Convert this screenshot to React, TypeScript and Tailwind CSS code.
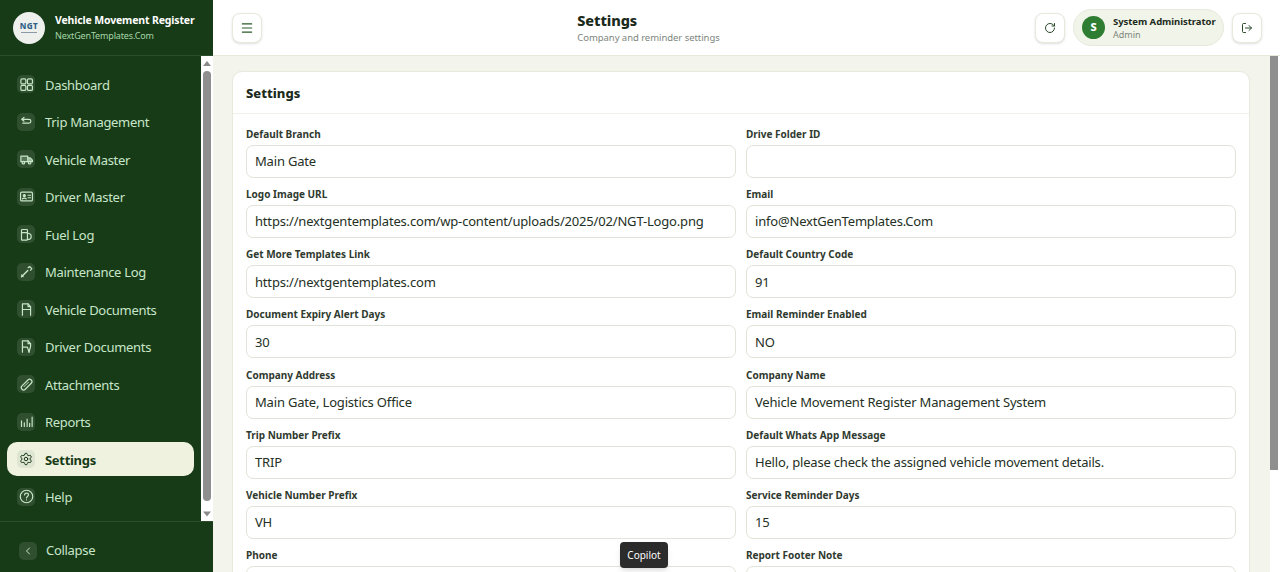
import { ChevronLeft, LogOut, Menu, RotateCw, Settings } from "lucide-react"
import type { FC, ReactNode } from "react"

const font = "font-['Noto_Sans','Open_Sans',sans-serif]"

const Glyph: FC<{ children: ReactNode }> = ({ children }) => (
  <svg width="15" height="15" viewBox="0 0 24 24" fill="none" stroke="currentColor" strokeWidth="1.9" strokeLinecap="round" strokeLinejoin="round">
    {children}
  </svg>
)

// sidebar glyphs, drawn to follow the reference strokes
const icons: Record<string, ReactNode> = {
  Dashboard: (
    <Glyph>
      <rect x="3" y="3" width="8" height="8" rx="2" />
      <rect x="13.5" y="3" width="8" height="8" rx="2" />
      <rect x="3" y="13.5" width="8" height="8" rx="2" />
      <rect x="13.5" y="13.5" width="8" height="8" rx="2" />
    </Glyph>
  ),
  "Trip Management": (
    <Glyph>
      <path d="M8 5.500 4.500 8.500 8 11.500" />
      <path d="M5 8.500h11c2 0 3 1.300 3 3s-1 3-3 3H6" />
    </Glyph>
  ),
  "Vehicle Master": (
    <Glyph>
      <path d="M3 6.500h11v9H3z" fill="currentColor" fillOpacity="0.25" />
      <path d="M14 9.500h4l3.500 3.500v2.500H14" fill="currentColor" fillOpacity="0.7" />
      <circle cx="7" cy="17" r="2" />
      <circle cx="17" cy="17" r="2" />
    </Glyph>
  ),
  "Driver Master": (
    <Glyph>
      <rect x="2.500" y="5" width="19" height="14" rx="2" />
      <circle cx="8.500" cy="10.500" r="1.700" fill="currentColor" />
      <path d="M5.500 16c.6-2 5.400-2 6 0" />
      <path d="M14.500 10h4M14.500 14h4" />
    </Glyph>
  ),
  "Fuel Log": (
    <Glyph>
      <rect x="4" y="4" width="9.500" height="17" rx="1" />
      <path d="M4 9h9.500" />
      <path d="M13.500 10c3.500 0 6 1.800 6 5s-2.500 5-6 5" />
    </Glyph>
  ),
  "Maintenance Log": (
    <Glyph>
      <path d="M4 20.500 14 10.500" strokeWidth="2.300" />
      <path d="m14.500 6 2.500-2 3.500 3.500-2 2.500" />
      <path d="M4 17.500 6.500 20" />
    </Glyph>
  ),
  "Vehicle Documents": (
    <Glyph>
      <path d="M5.500 21V3h9l4 4.500V21" />
      <path d="M14.500 3v4.500h4" />
      <path d="M5.500 12h13" />
    </Glyph>
  ),
  "Driver Documents": (
    <Glyph>
      <path d="M5.500 21V3h9l4 4.500V12l-2.500 9" />
      <path d="M14.500 3v4.500h4" />
      <path d="M5.500 13h8l2.500 8" />
    </Glyph>
  ),
  Attachments: (
    <Glyph>
      <rect x="1.500" y="8.500" width="21" height="7.500" rx="3.750" transform="rotate(-45 12 12)" />
      <path d="m8 15.500 7-7" strokeWidth="1.500" />
    </Glyph>
  ),
  Reports: (
    <Glyph>
      <path d="M4 11v9M8.500 14v6M13 8v12M17 15v5M21 5v15" />
    </Glyph>
  ),
  Settings: <Settings size={14} strokeWidth={1.7} />,
  Help: (
    <Glyph>
      <circle cx="12" cy="12" r="10" />
      <path d="M8.800 9.300c.4-3.700 6.400-3.700 6.400 0 0 2.500-3.200 2.600-3.200 5" />
      <path d="M12 17.500h.01" />
    </Glyph>
  ),
}

const navItems = [
  "Dashboard",
  "Trip Management",
  "Vehicle Master",
  "Driver Master",
  "Fuel Log",
  "Maintenance Log",
  "Vehicle Documents",
  "Driver Documents",
  "Attachments",
  "Reports",
  "Settings",
  "Help",
]

const fields = [
  ["Default Branch", "Main Gate"],
  ["Drive Folder ID", ""],
  ["Logo Image URL", "https://nextgentemplates.com/wp-content/uploads/2025/02/NGT-Logo.png"],
  ["Email", "info@NextGenTemplates.Com"],
  ["Get More Templates Link", "https://nextgentemplates.com"],
  ["Default Country Code", "91"],
  ["Document Expiry Alert Days", "30"],
  ["Email Reminder Enabled", "NO"],
  ["Company Address", "Main Gate, Logistics Office"],
  ["Company Name", "Vehicle Movement Register Management System"],
  ["Trip Number Prefix", "TRIP"],
  ["Default Whats App Message", "Hello, please check the assigned vehicle movement details."],
  ["Vehicle Number Prefix", "VH"],
  ["Service Reminder Days", "15"],
  ["Phone", ""],
  ["Report Footer Note", ""],
]

const Sidebar: FC = () => (
  <aside className="flex h-full w-[213px] shrink-0 flex-col bg-[#173a17]">
    <div className="flex h-[56px] shrink-0 items-center gap-[10px] border-b border-[#2c4d2c] pl-[13px]">
      <div className="flex h-[32px] w-[32px] flex-col items-center justify-center rounded-full bg-[#eef0ee]">
        <span className="text-[8px] leading-[8px] font-extrabold tracking-[0.5px] text-[#2f5f86]">NGT</span>
        <span className="mt-[2px] h-[1px] w-[16px] bg-[#8d9aa5]" />
      </div>
      <div className="pt-[2px]">
        <div className="text-[10.5px] leading-[15px] font-bold tracking-[-0.15px] text-white">Vehicle Movement Register</div>
        <div className="text-[9px] leading-[16px] tracking-[-0.15px] text-[#a5d6a7]">NextGenTemplates.Com</div>
      </div>
    </div>
    <div className="flex min-h-0 flex-1">
      <nav className="flex w-[201px] flex-col gap-[3.5px] pt-[11px] pl-[7px]">
        {navItems.map((label) => {
          const active = label === "Settings"
          return (
            <div
              key={label}
              className={`flex h-[34px] w-[187px] shrink-0 items-center gap-[10px] rounded-[10px] pl-[10px] ${
                active ? "bg-[#eef2df] font-bold text-[#173a17]" : "text-[#c8e6c9]"
              }`}
            >
              <span
                className={`flex h-[18px] w-[18px] items-center justify-center rounded-[5px] ${
                  active ? "bg-[#dfe5d3]" : "bg-[#2f4f2f]"
                }`}
              >
                {icons[label]}
              </span>
              <span className="pt-[3px] text-[13px] tracking-[-0.3px]">{label}</span>
            </div>
          )
        })}
      </nav>
      <div className="flex w-[12px] flex-col items-center bg-white">
        <svg className="h-[15px] w-[10px] shrink-0" viewBox="0 0 10 15" fill="#8a8a8a">
          <path d="M1 10 5 5l4 5z" />
        </svg>
        <div className="w-[8px] flex-1 rounded-full bg-[#8f8f8f]" />
        <svg className="h-[20px] w-[10px] shrink-0" viewBox="0 0 10 20" fill="#8a8a8a">
          <path d="M1 10.500h8l-4 5z" />
        </svg>
      </div>
    </div>
    <div className="flex h-[51px] shrink-0 items-center gap-[9px] border-t border-[#2c4d2c] pt-[7px] pl-[19px] text-[#c8e6c9]">
      <span className="flex h-[18px] w-[18px] items-center justify-center rounded-[5px] bg-[#2f4f2f]">
        <ChevronLeft size={12} />
      </span>
      <span className="text-[13px] tracking-[-0.3px]">Collapse</span>
    </div>
  </aside>
)

const IconButton: FC<{ children: ReactNode }> = ({ children }) => (
  <button className="flex h-[30px] w-[30px] items-center justify-center rounded-[8px] border border-[#e6e9dc] bg-white shadow-sm">
    {children}
  </button>
)

const Header: FC = () => (
  <header className="flex h-[56px] shrink-0 items-center border-b border-[#e6e9dc] bg-white pr-[18px] pl-[19px]">
    <IconButton>
      <Menu size={14} className="text-[#2b5a2b]" />
    </IconButton>
    <div className="flex flex-1 justify-center">
      <div className="pt-[2px]">
        <div className="text-[14.500px] leading-[18px] font-extrabold tracking-[-0.1px] text-[#1b2a1b]">Settings</div>
        <div className="mt-[1px] text-[9.500px] leading-[16px] tracking-[-0.05px] text-[#7d857d]">Company and reminder settings</div>
      </div>
    </div>
    <div className="flex items-center gap-[8px]">
      <IconButton>
        <RotateCw size={12} className="text-[#2b4a2b]" />
      </IconButton>
      <div className="flex h-[37px] w-[151px] items-center gap-[8px] rounded-full border border-[#e6e9dc] bg-[#f1f4e8] pl-[8px]">
        <span className="flex h-[23px] w-[23px] items-center justify-center rounded-full bg-[#2e7d32] text-[11px] font-extrabold text-white">
          S
        </span>
        <div>
          <div className="text-[9.500px] leading-[13px] font-bold tracking-[-0.05px] text-[#1b2a1b]">System Administrator</div>
          <div className="text-[9px] leading-[13px] text-[#7d857d]">Admin</div>
        </div>
      </div>
      <IconButton>
        <LogOut size={12} className="text-[#2b4a2b]" />
      </IconButton>
    </div>
  </header>
)

export default function App() {
  return (
    <div className={`relative flex h-[572px] overflow-hidden bg-white ${font}`}>
      <Sidebar />
      <div className="flex min-w-0 flex-1 flex-col">
        <Header />
        <div className="flex min-h-0 flex-1">
          <main className="min-w-0 flex-1 overflow-hidden bg-[#f3f5ec] pt-[15px] pr-[20px] pl-[19px]">
            <section className="rounded-t-[10px] border border-[#e6e9dc] bg-white">
              <h2 className="flex h-[42px] items-center border-b border-[#f0f2ea] pt-[2px] pl-[13px] text-[13px] font-extrabold text-[#1b2a1b]">
                Settings
              </h2>
              <div className="grid grid-cols-2 gap-x-[10px] gap-y-[7.150px] px-[13px] pt-[11px]">
                {fields.map(([label, value]) => (
                  <div key={label}>
                    <div className="mb-[2px] h-[18px] text-[10px] leading-[18px] font-bold text-[#2f3a2f]">{label}</div>
                    <div className="flex h-[33px] items-center rounded-[7px] border border-[#e1e4d8] bg-white px-[8px] pt-[1px] text-[13px] tracking-[-0.18px] text-[#243024]">
                      {value}
                    </div>
                  </div>
                ))}
              </div>
            </section>
          </main>
          <div className="w-[10px] bg-white">
            <div className="h-[414px] w-[8px] bg-[#8f8f8f]" />
          </div>
        </div>
      </div>
      <div className="absolute top-[542px] left-[620px] flex h-[26px] w-[48px] items-center justify-center rounded-[4px] bg-[#2b2b2b] text-[10px] text-white shadow-md">
        Copilot
      </div>
    </div>
  )
}
